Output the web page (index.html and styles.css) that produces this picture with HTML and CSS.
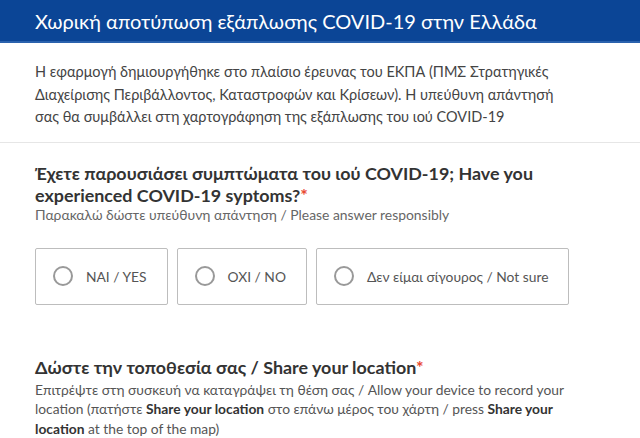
FILE: index.html
```html
<!DOCTYPE html>
<html lang="el">
<head>
<meta charset="utf-8">
<title>Χωρική αποτύπωση εξάπλωσης COVID-19 στην Ελλάδα</title>
<link rel="stylesheet" href="styles.css">
</head>
<body>
<header class="topbar">
  <h1 class="topbar-title">Χωρική αποτύπωση εξάπλωσης COVID-19 στην Ελλάδα</h1>
</header>
<section class="intro">
  <p>Η εφαρμογή δημιουργήθηκε στο πλαίσιο έρευνας του ΕΚΠΑ (ΠΜΣ Στρατηγικές Διαχείρισης Περιβάλλοντος, Καταστροφών και Κρίσεων). Η υπεύθυνη απάντησή σας θα συμβάλλει στη χαρτογράφηση της εξάπλωσης του ιού COVID-19</p>
</section>
<main class="form">
  <div class="question">
    <h2 class="q-title">Έχετε παρουσιάσει συμπτώματα του ιού COVID-19; Have you experienced COVID-19 syptoms?<span class="req">*</span></h2>
    <p class="q-desc">Παρακαλώ δώστε υπεύθυνη απάντηση / Please answer responsibly</p>
    <div class="choices">
      <label class="choice"><span class="radio"></span><span class="choice-text">NAI / YES</span></label>
      <label class="choice"><span class="radio"></span><span class="choice-text">OXI / NO</span></label>
      <label class="choice"><span class="radio"></span><span class="choice-text">Δεν είμαι σίγουρος / Not sure</span></label>
    </div>
  </div>
  <div class="question q-location">
    <h2 class="q-title">Δώστε την τοποθεσία σας / Share your location<span class="req">*</span></h2>
    <p class="q-desc q-desc-long">Επιτρέψτε στη συσκευή να καταγράψει τη θέση σας / Allow your device to record your location (πατήστε <b>Share your location</b> στο επάνω μέρος του χάρτη / press <b>Share your location</b> at the top of the map)</p>
  </div>
</main>
</body>
</html>
```
FILE: styles.css
```css
* { box-sizing: border-box; }
html, body { margin: 0; padding: 0; background: #fff; }
body {
  font-family: Lato, "Noto Sans", "DejaVu Sans", sans-serif;
  color: #444;
  width: 640px;
  overflow: hidden;
}
.topbar {
  height: 43px;
  background: #0b4596;
  border-bottom: 2px solid #2a62ad;
  display: flex;
  align-items: center;
  padding: 0 35px;
}
.topbar-title {
  margin: 0;
  font-size: 20px;
  font-weight: 400;
  color: #fff;
  white-space: nowrap;
}
.intro {
  padding: 18px 70px 13px 35px;
  border-bottom: 1px solid #e6e6e6;
}
.intro p {
  margin: 0;
  font-size: 14.5px;
  line-height: 22.5px;
  color: #444;
}
.form { padding: 0 35px; }
.question { padding-top: 19px; }
.q-title {
  margin: 0;
  font-size: 17.9px;
  font-weight: 700;
  line-height: 22px;
  color: #333;
  padding-right: 60px;
}
.req { color: #e8482f; }
.q-desc {
  margin: 0;
  font-size: 13.9px;
  line-height: 18px;
  color: #666;
}
.choices {
  display: flex;
  gap: 9px;
  margin-top: 24px;
}
.choice {
  display: flex;
  align-items: center;
  gap: 13px;
  height: 57px;
  padding: 0 20px 0 17px;
  border: 1px solid #bdbdbd;
  border-radius: 2px;
  font-size: 13.8px;
  color: #555;
}
.radio {
  width: 20px;
  height: 20px;
  border: 2.5px solid #999;
  border-radius: 50%;
  flex: none;
}
.q-location { padding-top: 51px; }
.q-desc-long {
  margin-top: 2px;
  font-size: 13.8px;
  line-height: 19.5px;
  color: #555;
  padding-right: 25px;
}
.q-desc-long b { color: #333; font-weight: 700; }
```
